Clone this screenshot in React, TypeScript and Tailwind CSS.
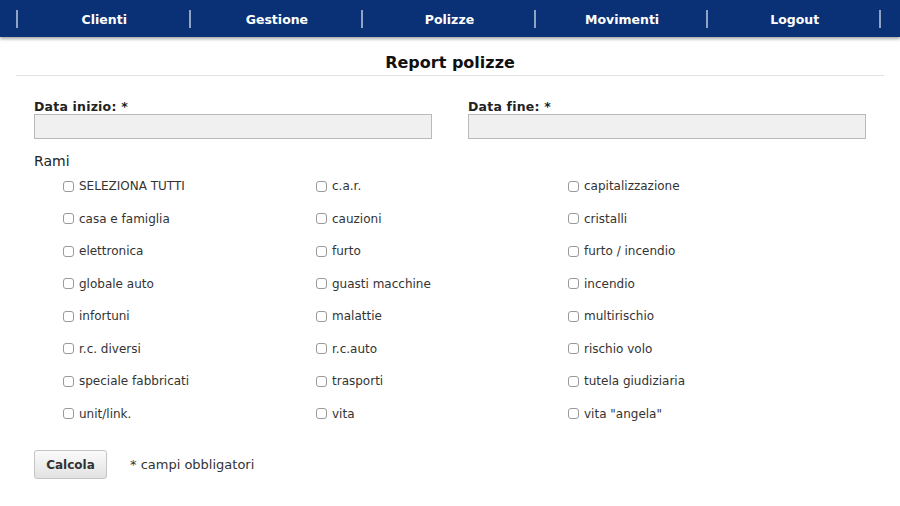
const menu = ["Clienti", "Gestione", "Polizze", "Movimenti", "Logout"];

const rami = [
  "SELEZIONA TUTTI", "c.a.r.", "capitalizzazione",
  "casa e famiglia", "cauzioni", "cristalli",
  "elettronica", "furto", "furto / incendio",
  "globale auto", "guasti macchine", "incendio",
  "infortuni", "malattie", "multirischio",
  "r.c. diversi", "r.c.auto", "rischio volo",
  "speciale fabbricati", "trasporti", "tutela giudiziaria",
  "unit/link.", "vita", 'vita "angela"',
];

export default function App() {
  return (
    <div className="w-[900px] h-[506px] bg-white overflow-hidden font-['DejaVu_Sans',Verdana,sans-serif] text-[#222]">
      {/* top menu */}
      <nav className="h-[37px] bg-[#0a3176] shadow-[0_2px_3px_rgba(0,0,0,0.35)] pl-[16px]">
        <ul className="flex items-center h-full">
          <span className="h-[18px] w-[2px] bg-[#8fa3c4]" />
          {menu.map((m) => (
            <li key={m} className="w-[172.6px] h-full flex items-center justify-center relative pt-[3px]">
              <span className="text-white text-[12.5px] font-bold">{m}</span>
              <span className="absolute right-0 top-[10px] h-[18px] w-[2px] bg-[#8fa3c4]" />
            </li>
          ))}
        </ul>
      </nav>

      <div className="px-[16px]">
        <h1 className="text-center text-[16px] font-bold text-[#111] pt-[14px] border-b border-[#e2e2e2]">
          Report polizze
        </h1>

        <form className="px-[18px] pt-[24px]">
          <div className="grid grid-cols-2 gap-x-[36px]">
            <div>
              <label className="block text-[12.5px] font-bold leading-[14px] tracking-[0.2px] text-[#222]">Data inizio: *</label>
              <div className="h-[25px] bg-[#f0f0f0] border border-[#b9b9b9]" />
            </div>
            <div>
              <label className="block text-[12.5px] font-bold leading-[14px] tracking-[0.2px] text-[#222]">Data fine: *</label>
              <div className="h-[25px] bg-[#f0f0f0] border border-[#b9b9b9]" />
            </div>
          </div>

          <div className="text-[14px] leading-[16px] mt-[14px]">Rami</div>

          <div className="grid grid-cols-[253px_252px_252px] ml-[29px] mt-[1px]">
            {rami.map((r) => (
              <label key={r} className="flex items-center h-[32.5px] text-[12px] text-[#333]">
                <span className="w-[11px] h-[11px] rounded-[3px] border border-[#9a9a9a] bg-white mr-[5px]" />
                {r}
              </label>
            ))}
          </div>

          <div className="flex items-center mt-[20px]">
            <button
              type="button"
              className="w-[73px] h-[29px] rounded-[3px] border border-[#c4c4c4] bg-gradient-to-b from-[#fbfbfb] to-[#e2e2e2] text-[12px] font-bold text-[#333]"
            >
              Calcola
            </button>
            <span className="ml-[23px] text-[13px] text-[#333]">* campi obbligatori</span>
          </div>
        </form>
      </div>
    </div>
  );
}
